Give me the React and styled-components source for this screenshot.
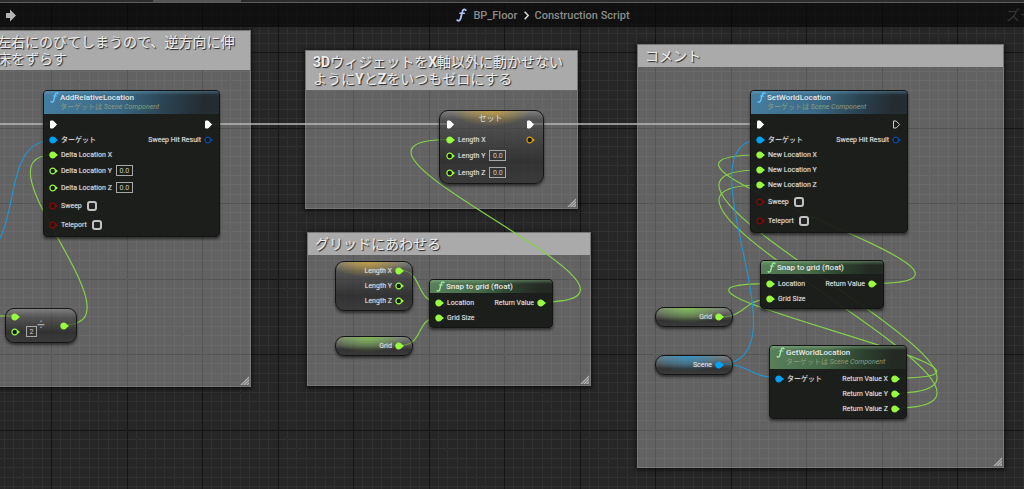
import React from "react";
import styled, { createGlobalStyle, css } from "styled-components";

const GREEN = "#98fb42";
const BLUE = "#00a3f5";
const NAVY = "#0a4aa8";
const RED = "#8c0505";
const GOLD = "#d69a1c";

const Global = createGlobalStyle`
  * { box-sizing: border-box; }
  body {
    margin: 0;
    background: #262626;
    color: #dcdcdc;
    font-family: Roboto, "Noto Sans CJK JP", sans-serif;
    font-size: 7px;
  }
  h2, h3 { margin: 0; }
`;

const Page = styled.div`
  display: flex;
  flex-direction: column;
  min-height: 100vh;
`;

const TabStrip = styled.div`
  display: flex;
  height: 3px;
  padding-left: 153px;
  background: #2c2c2c;
  border-bottom: 1px solid #5c5c5c;
`;

const ActiveTab = styled.div`
  width: 88px;
  background: #555;
`;

const Canvas = styled.main`
  position: relative;
  flex: 1;
  overflow: hidden;
`;

const Drawing = styled.svg`
  position: absolute;
  inset: 0;
  width: 100%;
  height: 100%;
  pointer-events: none;
`;

const TitleBar = styled.header`
  position: relative;
  display: flex;
  align-items: center;
  height: 24px;
  background: rgba(8, 8, 8, 0.72);
  overflow: hidden;
`;

const BackButton = styled.button`
  display: flex;
  width: 80px;
  padding: 0 0 0 5px;
  border: 0;
  background: none;
`;

const Breadcrumb = styled.nav`
  display: flex;
  flex: 1;
  align-items: center;
  justify-content: center;
  gap: 6px;
  font-size: 11px;
  font-weight: 500;
`;

const Crumb = styled.a`
  color: #8b8b8b;
  text-decoration: none;
  white-space: nowrap;
`;

const ZoomLabel = styled.div`
  width: 18px;
  overflow: hidden;
  color: #363636;
  font-size: 14px;
  line-height: 20px;
  white-space: nowrap;
`;

const CommentBox = styled.section`
  position: absolute;
  left: ${(p) => p.$x}px;
  top: ${(p) => p.$y}px;
  width: ${(p) => p.$w}px;
  height: ${(p) => p.$h}px;
  border: 1px solid rgba(130, 130, 130, 0.6);
  background: rgba(255, 255, 255, 0.28);
  box-shadow: 0 1px 4px 1px rgba(0, 0, 0, 0.6);
`;

const CommentTitle = styled.h2`
  padding: 3px 7px 2px;
  background: #aaa;
  color: #ececec;
  font-size: 14px;
  font-weight: 400;
  line-height: 17px;
  text-shadow: 1px 1px 1px #222;
  white-space: pre;
`;

const Grip = styled.svg`
  position: absolute;
  right: 1px;
  bottom: 1px;
`;

const glow = css`
  background:
    radial-gradient(ellipse 40px 15px at ${(p) => p.$glowAt || "42%"} 0, ${(p) => p.$glow}, transparent),
    linear-gradient(rgba(150, 150, 150, 0.55), rgba(70, 70, 70, 0.5) 8px, rgba(30, 30, 30, 0.7) 70%, rgba(45, 45, 45, 0.75));
`;

const NodeBox = styled.article`
  position: absolute;
  left: ${(p) => p.$x}px;
  top: ${(p) => p.$y}px;
  width: ${(p) => p.$w}px;
  border: 1px solid #151515;
  border-radius: ${(p) => (p.$pill ? 9 : 4)}px;
  box-shadow: 0 2px 3px rgba(0, 0, 0, 0.55);
  overflow: hidden;
  ${(p) => (p.$pill ? glow : "background: rgba(22, 24, 22, 0.92);")}
`;

const tints = {
  blue: "linear-gradient(rgba(120,190,225,.35), transparent 4px), linear-gradient(100deg, #467d9f 0, #3b6a87 42%, #2b4453 68%, #242c31 90%)",
  green: "linear-gradient(rgba(170,220,170,.35), transparent 4px), linear-gradient(100deg, #58805a 0, #466a49 42%, #2c402e 68%, #232923 90%)",
};

const NodeHeader = styled.header`
  display: flex;
  gap: 1px;
  padding: 1px 0 0 6px;
  height: ${(p) => (p.$tall ? 23 : 13)}px;
  background: ${(p) => tints[p.$tint]};
`;

const NodeTitle = styled.h3`
  color: #e6e6e6;
  font-size: 8px;
  font-weight: 500;
  line-height: 11px;
  white-space: nowrap;
`;

const NodeSubtitle = styled.div`
  color: #8d9c7c;
  font-size: 7px;
  line-height: 9px;
  white-space: nowrap;
`;

const NodeBody = styled.div`
  padding: ${(p) => (p.$pill ? "1px 8px 2px 6px" : "2px 6px 2px 5px")};
`;

const rowHeights = { exec: 16, plain: 15, number: 17, bool: 19 };

const Row = styled.div`
  display: flex;
  align-items: center;
  justify-content: space-between;
  height: ${(p) => rowHeights[p.$kind]}px;
`;

const TitledExecRow = styled.div`
  display: flex;
  align-items: flex-end;
  justify-content: space-between;
  height: 20px;
  padding-bottom: 3px;
`;

const InlineTitle = styled.h3`
  align-self: flex-start;
  font-size: 8px;
  font-weight: 400;
  line-height: 14px;
`;

const PinGroup = styled.div`
  display: flex;
  align-items: center;
  gap: 3px;
  margin-left: ${(p) => (p.$out ? "auto" : 0)};
  line-height: 10px;
  white-space: nowrap;
  text-shadow: 0 0 1px rgba(220, 220, 220, 0.6);
`;

const Field = styled.label`
  display: flex;
  align-items: center;
  gap: ${(p) => p.$gap || 4}px;
`;

const NumberBox = styled.input`
  width: ${(p) => p.$w || 17}px;
  height: 11px;
  padding: 0;
  border: 1px solid #a8a8a8;
  background: transparent;
  color: #c8c8c8;
  font: inherit;
  text-align: center;
`;

const CheckBox = styled.input`
  appearance: none;
  width: 10px;
  height: 10px;
  margin: 0;
  border: 2px solid #c2c2c2;
  border-radius: 3px;
  background: #222;
`;

const MathBody = styled.div`
  display: flex;
  align-items: center;
  height: 33px;
  padding: 0 7px 0 5px;
`;

const MathInputs = styled.div`
  display: flex;
  flex-direction: column;
  padding-bottom: 3px;
`;

const MathValue = styled.div`
  display: flex;
  align-items: flex-start;
  flex: 1;
  height: 33px;
  padding: 17px 0 0 6px;
`;

const MathSign = styled.span`
  margin-top: -8px;
  color: #aaa;
  font-size: 14px;
  line-height: 12px;
`;

function Pin({ color, filled }) {
  return (
    <svg width="9" height="8" viewBox="0 0 9 8" aria-hidden="true">
      <path d="M6.2 1.8L9 4L6.2 6.2Z" fill={color} />
      <circle cx="3.7" cy="4" r="2.8" fill={filled ? color : "#181a18"} stroke={color} strokeWidth="1.2" />
    </svg>
  );
}

function ExecPin({ filled = true }) {
  return (
    <svg width="9" height="9" viewBox="0 0 9 9" aria-hidden="true">
      <path
        d="M1.5 1H4.2L7.6 4.5L4.2 8H1.5Z"
        fill={filled ? "#fff" : "none"}
        stroke={filled ? "#fff" : "#ccc"}
        strokeLinejoin="round"
      />
    </svg>
  );
}

function FunctionIcon({ color, height = 11 }) {
  return (
    <svg width={Math.round(height * 0.8)} height={height} viewBox="0 0 12 15" fill="none" stroke={color} strokeLinecap="round" aria-hidden="true">
      <path d="M10.6 2.2C9 .6 7.4 1.6 6.9 4L5.2 10.8C4.6 13.4 3 14.6 1.4 13.2" strokeWidth="2" />
      <path d="M4.2 5.6H9.2" strokeWidth="1.4" />
    </svg>
  );
}

function Input({ label, color = GREEN, filled, children, gap }) {
  return (
    <PinGroup>
      <Pin color={color} filled={filled} />
      {children ? <Field $gap={gap}>{label}{children}</Field> : <span>{label}</span>}
    </PinGroup>
  );
}

function Output({ label, color = GREEN, filled }) {
  return (
    <PinGroup $out>
      {label && <span>{label}</span>}
      <Pin color={color} filled={filled} />
    </PinGroup>
  );
}

function FunctionNode({ title, subtitle, tint, children, ...pos }) {
  return (
    <NodeBox {...pos}>
      <NodeHeader $tint={tint} $tall={Boolean(subtitle)}>
        <FunctionIcon color={tint === "blue" ? "#62c4ff" : "#9de89d"} />
        <div>
          <NodeTitle>{title}</NodeTitle>
          {subtitle && <NodeSubtitle>ターゲットは <em>Scene Component</em></NodeSubtitle>}
        </div>
      </NodeHeader>
      <NodeBody>{children}</NodeBody>
    </NodeBox>
  );
}

function VariableNode({ pins, color = GREEN, glowColor, ...pos }) {
  return (
    <NodeBox $pill $w={78} $glow={glowColor} {...pos}>
      <NodeBody $pill>
        {pins.map(([label, filled]) => (
          <Row $kind="plain" key={label}><Output label={label} color={color} filled={filled} /></Row>
        ))}
      </NodeBody>
    </NodeBox>
  );
}

function Comment({ text, ...pos }) {
  return (
    <CommentBox {...pos}>
      <CommentTitle>
        {text.split(/([0-9A-Z]+)/).map((part, i) => (i % 2 ? <b key={i}>{part}</b> : part))}
      </CommentTitle>
      <Grip width="9" height="9" viewBox="0 0 9 9" aria-hidden="true">
        <path d="M0 9L9 0V9Z" fill="#8c8c8c" />
        <path d="M1 9L9 1M4 9L9 4M7 9L9 7" stroke="#b2b2b2" />
      </Grip>
    </CommentBox>
  );
}

function SweepRows() {
  return (
    <>
      <Row $kind="bool"><Input label="Sweep" color={RED} gap={5}><CheckBox type="checkbox" /></Input></Row>
      <Row $kind="bool"><Input label="Teleport" color={RED} gap={5}><CheckBox type="checkbox" /></Input></Row>
    </>
  );
}

function ExecAndTarget({ outFilled }) {
  return (
    <>
      <Row $kind="exec"><ExecPin /><ExecPin filled={outFilled} /></Row>
      <Row $kind="plain">
        <Input label="ターゲット" color={BLUE} filled />
        <Output label="Sweep Hit Result" color={NAVY} />
      </Row>
    </>
  );
}

function SnapNode(pos) {
  return (
    <FunctionNode title="Snap to grid (float)" tint="green" $w={124} {...pos}>
      <Row $kind="plain"><Input label="Location" filled /><Output label="Return Value" filled /></Row>
      <Row $kind="plain"><Input label="Grid Size" filled /></Row>
    </FunctionNode>
  );
}

const TILE = 151;
const steps = Array.from({ length: 16 }, (_, i) => Math.round((i * TILE) / 16));

function GridPaper() {
  return (
    <Drawing aria-hidden="true">
      <defs>
        <pattern id="grid" x="51" y="49" width={TILE} height={TILE} patternUnits="userSpaceOnUse">
          {steps.map((s) => (
            <path key={s} d={`M${s} 0h1V${TILE}h-1ZM0 ${s}V${s + 1}H${TILE}V${s}Z`} fill="#303030" />
          ))}
          {[steps[0], steps[8]].map((s) => (
            <path key={s} d={`M${s} 0h1V${TILE}h-1ZM0 ${s}V${s + 1}H${TILE}V${s}Z`} fill="#151515" />
          ))}
        </pattern>
      </defs>
      <rect width="100%" height="100%" fill="url(#grid)" />
    </Drawing>
  );
}

const greenWires = [
  "M-4 316H15",
  "M64 325C148 325 -30 155 53 155",
  "M541 302C707 302 285 139.500 450 139.500",
  "M399 270C424 270 414 302 439 302",
  "M399 345.500C426 345.500 414 317.500 439 317.500",
  "M872 283.500C1057 283.500 578 155 761 155",
  "M895 378C1078 378 588 283.500 770 283.500",
  "M895 393C1082 393 574 170 761 170",
  "M895 408C1082 408 574 185 761 185",
  "M720 317C746 317 744 299 770 299",
];

const blueWires = [
  "M-6 248C20 215 4 141 53 140",
  "M720 364C812 364 676 140 761 139.500",
  "M720 364C752 364 750 378 780 378",
];

function Wires() {
  return (
    <Drawing aria-hidden="true">
      <g transform="translate(0 -3)" fill="none">
        <path d="M0 124H53M209 124H450M532 124H760" stroke="#b8b8b8" strokeWidth="1.5" />
        {greenWires.map((d) => <path key={d} d={d} stroke="#85cf48" strokeWidth="1.2" />)}
        {blueWires.map((d) => <path key={d} d={d} stroke="#2394cc" strokeWidth="1.2" />)}
      </g>
    </Drawing>
  );
}

export default function App() {
  return (
    <Page>
      <Global />
      <TabStrip><ActiveTab /></TabStrip>
      <Canvas>
        <GridPaper />
        <TitleBar>
          <BackButton aria-label="進む">
            <svg width="12" height="13" viewBox="0 0 12 13" fill="#b4b4b4">
              <path d="M1 4H5V.5L11 6.500L5 12.500V9H1Z" />
            </svg>
          </BackButton>
          <Breadcrumb>
            <FunctionIcon color="#a9c3f2" height={14} />
            <Crumb href="#floor">BP_Floor</Crumb>
            <svg width="5" height="9" viewBox="0 0 5 9" fill="none" stroke="#d8d8d8" strokeWidth="1.6">
              <path d="M.7 .7L4.200 4.500L.7 8.300" />
            </svg>
            <Crumb href="#script">Construction Script</Crumb>
          </Breadcrumb>
          <ZoomLabel>ズーム</ZoomLabel>
        </TitleBar>

        <Comment text={"左右にのびてしまうので、逆方向に伸\n床をずらす"} $x={-11} $y={27} $w={262} $h={357} />
        <Comment text={"3DウィジェットをX軸以外に動かせない\nようにYとZをいつもゼロにする"} $x={305} $y={47} $w={273} $h={159} />
        <Comment text="グリッドにあわせる" $x={307} $y={229} $w={284} $h={154} />
        <Comment text="コメント" $x={637} $y={41} $w={367} $h={424} />

        <Wires />

        <FunctionNode title="AddRelativeLocation" subtitle tint="blue" $x={43} $y={87} $w={177}>
          <ExecAndTarget outFilled />
          <Row $kind="plain"><Input label="Delta Location X" filled /></Row>
          <Row $kind="number"><Input label="Delta Location Y"><NumberBox defaultValue="0.0" /></Input></Row>
          <Row $kind="number"><Input label="Delta Location Z"><NumberBox defaultValue="0.0" /></Input></Row>
          <SweepRows />
        </FunctionNode>

        <NodeBox $pill $glow="transparent" $x={5} $y={305} $w={72}>
          <MathBody>
            <MathInputs>
              <Row $kind="plain"><Pin color={GREEN} filled /></Row>
              <Row $kind="plain"><Pin color={GREEN} /></Row>
            </MathInputs>
            <MathValue>
              <NumberBox $w={11} defaultValue="2" aria-label="除数" />
              <MathSign>÷</MathSign>
            </MathValue>
            <Pin color={GREEN} filled />
          </MathBody>
        </NodeBox>

        <NodeBox $pill $glow="rgba(205,165,60,.8)" $glowAt="50%" $x={439} $y={107} $w={105}>
          <NodeBody $pill>
            <TitledExecRow><ExecPin /><InlineTitle>セット</InlineTitle><ExecPin /></TitledExecRow>
            <Row $kind="plain"><Input label="Length X" filled /><Output color={GOLD} /></Row>
            <Row $kind="number"><Input label="Length Y"><NumberBox defaultValue="0.0" /></Input></Row>
            <Row $kind="number"><Input label="Length Z"><NumberBox defaultValue="0.0" /></Input></Row>
          </NodeBody>
        </NodeBox>

        <VariableNode pins={[["Length X", true], ["Length Y", false], ["Length Z", false]]} glowColor="rgba(205,165,60,.8)" $x={335} $y={258} />
        <VariableNode pins={[["Grid", true]]} glowColor="rgba(130,200,80,.8)" $x={335} $y={333} />
        <SnapNode $x={429} $y={276} />

        <FunctionNode title="SetWorldLocation" subtitle tint="blue" $x={750} $y={87} $w={158}>
          <ExecAndTarget outFilled={false} />
          <Row $kind="plain"><Input label="New Location X" filled /></Row>
          <Row $kind="plain"><Input label="New Location Y" filled /></Row>
          <Row $kind="plain"><Input label="New Location Z" filled /></Row>
          <SweepRows />
        </FunctionNode>

        <SnapNode $x={760} $y={257} />
        <VariableNode pins={[["Grid", true]]} glowColor="rgba(130,200,80,.8)" $x={655} $y={304} />
        <VariableNode pins={[["Scene", true]]} color={BLUE} glowColor="rgba(40,150,205,.8)" $x={655} $y={352} />

        <FunctionNode title="GetWorldLocation" subtitle tint="green" $x={769} $y={342} $w={138}>
          <Row $kind="plain"><Input label="ターゲット" color={BLUE} filled /><Output label="Return Value X" filled /></Row>
          <Row $kind="plain"><Output label="Return Value Y" filled /></Row>
          <Row $kind="plain"><Output label="Return Value Z" filled /></Row>
        </FunctionNode>
      </Canvas>
    </Page>
  );
}
